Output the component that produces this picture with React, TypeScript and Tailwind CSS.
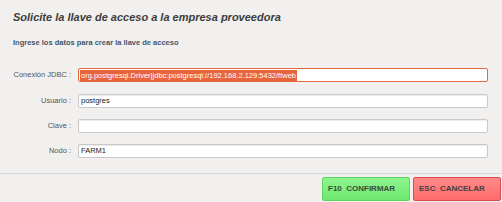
export default function App() {
  const filas = [
    { label: "Usuario :", valor: "postgres", mt: "mt-[12px]" },
    { label: "Clave :", valor: "", mt: "mt-[11px]" },
    { label: "Nodo :", valor: "FARM1", mt: "mt-[11px]" },
  ];

  return (
    <div
      className="w-[502px] h-[202px] bg-[#f1f0ee] flex flex-col overflow-hidden"
      style={{ fontFamily: '"Liberation Sans", Arial, sans-serif' }}
    >
      <h1 className="pl-[13px] pt-[10px] text-[11px] leading-[14px] font-bold italic text-[#3c3c3c]">
        Solicite la llave de acceso a la empresa proveedora
      </h1>
      <p className="pl-[13px] mt-[14px] text-[7.5px] leading-[10px] font-bold text-[#46556a]">
        Ingrese los datos para crear la llave de acceso
      </p>

      {/* Formulario */}
      <div className="mt-[20px] flex flex-col">
        <div className="flex items-center">
          <label className="w-[72px] text-right text-[7.5px] text-[#555] pr-[1px]">
            Conexión JDBC :
          </label>
          <div className="ml-[6px] w-[410px] h-[14px] flex items-center rounded-[2px] border border-[#e3693e] bg-white px-[1px] text-[7.5px] whitespace-nowrap overflow-hidden">
            <span className="bg-[#e8643c] text-white leading-[11px] px-[1px]">
              org.postgresql.Driver|jdbc:postgresql://192.168.2.129:5432/ftweb
            </span>
          </div>
        </div>
        {filas.map((f) => (
          <div key={f.label} className={`flex items-center ${f.mt}`}>
            <label className="w-[72px] text-right text-[7.5px] text-[#555] pr-[1px]">
              {f.label}
            </label>
            <div className="ml-[6px] w-[410px] h-[14px] flex items-center rounded-[2px] border border-[#c9c9c9] bg-white px-[2px] text-[7.5px] text-[#222] shadow-[inset_0_1px_1px_rgba(0,0,0,0.08)]">
              {f.valor}
            </div>
          </div>
        ))}
      </div>

      <div className="mt-[15px] border-t border-[#d9d9d9]" />

      {/* Botones */}
      <div className="mt-[3px] flex justify-end gap-[3px] pr-[1px]">
        <button className="w-[88px] h-[24px] rounded-[2px] border border-[#5fd35f] bg-gradient-to-b from-[#8ff58f] to-[#6ee86e] text-left pl-[5px] text-[8px] font-bold text-[#3d4a3d]">
          F10&nbsp; CONFIRMAR
        </button>
        <button className="w-[88px] h-[24px] rounded-[2px] border border-[#d94c4c] bg-gradient-to-b from-[#ff8a8a] to-[#ff6b6b] text-left pl-[5px] text-[8px] font-bold text-[#4a3d3d]">
          ESC&nbsp; CANCELAR
        </button>
      </div>
    </div>
  );
}
